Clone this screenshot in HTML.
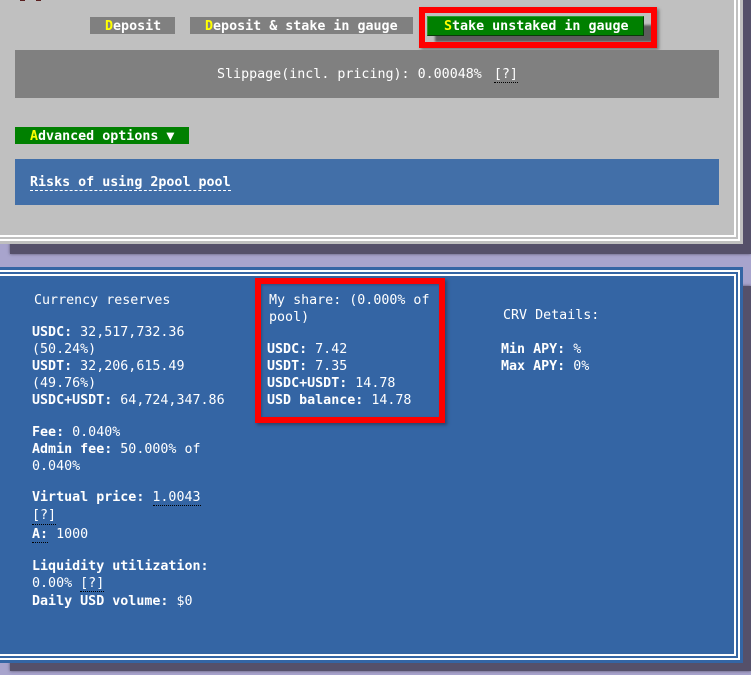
<!DOCTYPE html>
<html>
<head>
<meta charset="utf-8">
<style>
html,body{margin:0;padding:0;}
body{width:751px;height:675px;overflow:hidden;position:relative;background:#a8a4cd;font-family:"DejaVu Sans Mono","Liberation Mono",monospace;font-size:13.33px;color:#fff;}
div{position:absolute;box-sizing:border-box;}
.t{white-space:pre;line-height:18px;height:18px;margin-top:2px;}
b{font-weight:bold;}
i{font-style:normal;color:#ff0;}
.g{background:#808080;}
.u{border-bottom:1px dotted #000;}
</style>
</head>
<body>
<!-- shadows -->
<div style="left:10px;top:0;width:741px;height:254px;background:#55506a;box-shadow:0 0 3px #55506a;"></div>
<div style="left:10px;top:286px;width:741px;height:385px;background:#55506a;box-shadow:0 0 3px #55506a;"></div>

<!-- upper panel -->
<div style="left:0;top:0;width:743px;height:244px;background:#c0c0c0;"></div>
<div style="left:-10px;top:-10px;width:750px;height:251px;border:2px solid #fff;"></div>
<div style="left:-10px;top:-10px;width:746px;height:247px;border:2px solid #fff;"></div>

<div style="left:20px;top:0;width:5px;height:1px;background:#5a2020;"></div>
<div style="left:36px;top:0;width:5px;height:1px;background:#5a2020;"></div>

<div class="g" style="left:90px;top:17px;width:85px;height:17px;"></div>
<div class="t" style="left:105px;top:16px;"><b><i>D</i>eposit</b></div>
<div class="g" style="left:190px;top:17px;width:223px;height:17px;"></div>
<div class="t" style="left:205px;top:16px;"><b><i>D</i>eposit &amp; stake in gauge</b></div>

<div style="left:425px;top:13px;width:226px;height:29px;background:#c0c0c0;"></div>
<div style="left:435px;top:25px;width:218px;height:17px;background:#5c5c5c;filter:blur(1px);"></div>
<div style="left:427px;top:16px;width:217px;height:20px;background:#008000;border:1px solid;border-color:#2f9a2f #0a3a0a #0a3a0a #2f9a2f;"></div>
<div class="t" style="left:444px;top:16px;"><b><i>S</i>take unstaked in gauge</b></div>
<div style="left:419px;top:7px;width:238px;height:41px;border:6px solid #f00;box-shadow:2px 2px 3px rgba(60,60,60,.55);"></div>

<div class="g" style="left:15px;top:50px;width:704px;height:48px;"></div>
<div class="t" style="left:217px;top:64px;">Slippage(incl. pricing): 0.00048% <span class="u" style="display:inline-block;height:16px;margin-left:4px;">[?]</span></div>

<div style="left:15px;top:127px;width:174px;height:17px;background:#008000;"></div>
<div class="t" style="left:30px;top:126px;"><b><i>A</i>dvanced options ▼</b></div>

<div style="left:15px;top:159px;width:704px;height:46px;background:#426fa8;"></div>
<div class="t" style="left:30px;top:172px;"><b>Risks of using 2pool pool</b></div>
<div style="left:30px;top:190px;width:201px;height:0;border-top:1px dashed #fff;"></div>

<!-- lower panel -->
<div style="left:0;top:267px;width:743px;height:396px;background:#3465a4;"></div>
<div style="left:-10px;top:270px;width:750px;height:390px;border:2px solid #fff;"></div>
<div style="left:-10px;top:274px;width:746px;height:382px;border:2px solid #fff;"></div>

<!-- left column -->
<div class="t" style="left:34px;top:290px;">Currency reserves</div>
<div class="t" style="left:32px;top:322px;"><b>USDC:</b> 32,517,732.36</div>
<div class="t" style="left:32px;top:339px;">(50.24%)</div>
<div class="t" style="left:32px;top:356px;"><b>USDT:</b> 32,206,615.49</div>
<div class="t" style="left:32px;top:373px;">(49.76%)</div>
<div class="t" style="left:32px;top:390px;"><b>USDC+USDT:</b> 64,724,347.86</div>
<div class="t" style="left:32px;top:422px;"><b>Fee:</b> 0.040%</div>
<div class="t" style="left:32px;top:439px;"><b>Admin fee:</b> 50.000% of</div>
<div class="t" style="left:32px;top:456px;">0.040%</div>
<div class="t" style="left:32px;top:487px;"><b>Virtual price:</b> 1.0043</div>
<div style="left:153px;top:505px;width:48px;height:0;border-top:1px dotted #000;"></div>
<div class="t" style="left:32px;top:505px;">[?]</div>
<div style="left:32px;top:524px;width:24px;height:0;border-top:1px dotted #000;"></div>
<div class="t" style="left:32px;top:524px;"><b>A:</b> 1000</div>
<div style="left:32px;top:542px;width:16px;height:0;border-top:1px dotted #000;"></div>
<div class="t" style="left:32px;top:556px;"><b>Liquidity utilization:</b></div>
<div class="t" style="left:32px;top:573px;">0.00% <span style="margin-left:0">[?]</span></div>
<div style="left:80px;top:591px;width:24px;height:0;border-top:1px dotted #000;"></div>
<div class="t" style="left:32px;top:591px;"><b>Daily USD volume:</b> $0</div>

<!-- middle column -->
<div style="left:255px;top:278px;width:190px;height:145px;border:6px solid #f00;box-shadow:2px 2px 3px rgba(40,40,60,.55),inset 1px 1px 2px rgba(40,40,60,.4);"></div>
<div class="t" style="left:269px;top:290px;">My share: (0.000% of</div>
<div class="t" style="left:269px;top:307px;">pool)</div>
<div class="t" style="left:267px;top:339px;"><b>USDC:</b> 7.42</div>
<div class="t" style="left:267px;top:356px;"><b>USDT:</b> 7.35</div>
<div class="t" style="left:267px;top:373px;"><b>USDC+USDT:</b> 14.78</div>
<div class="t" style="left:267px;top:390px;"><b>USD balance:</b> 14.78</div>

<!-- right column -->
<div class="t" style="left:503px;top:305px;">CRV Details:</div>
<div class="t" style="left:501px;top:339px;"><b>Min APY:</b> %</div>
<div class="t" style="left:501px;top:356px;"><b>Max APY:</b> 0%</div>
</body>
</html>
